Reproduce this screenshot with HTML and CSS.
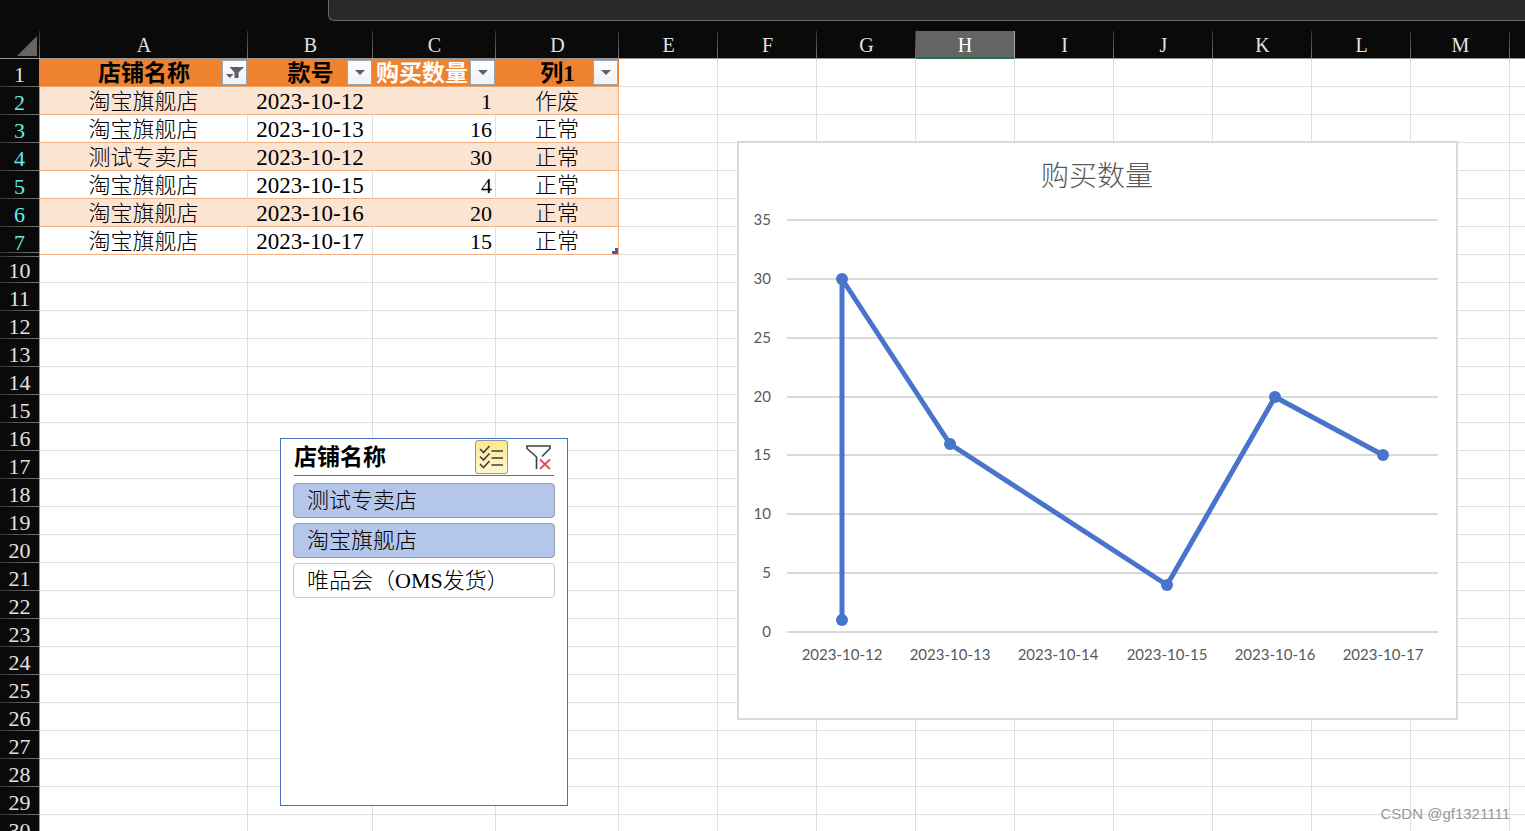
FILE: index.html
```html
<!DOCTYPE html>
<html lang="zh-CN">
<head>
<meta charset="utf-8">
<title>购买数量</title>
<link rel="stylesheet" href="styles.css">
</head>
<body>
<header class="topbar"><div class="formula-bar"></div></header>
<main class="workbook">
  <table class="sheet">
    <colgroup>
      <col class="col-head"><col class="col-a"><col class="col-b"><col class="col-c"><col class="col-c">
      <col class="col-std"><col class="col-std"><col class="col-std"><col class="col-std"><col class="col-std">
      <col class="col-std"><col class="col-std"><col class="col-std"><col class="col-std"><col>
    </colgroup>
    <thead><tr id="letters"></tr></thead>
    <tbody id="rows"></tbody>
  </table>

  <section class="slicer" aria-label="店铺名称">
    <div class="slicer-head">
      <h2 class="slicer-title">店铺名称</h2>
      <button class="tool tool-on" type="button" aria-label="多选">
        <svg width="26" height="26" viewBox="0 0 26 26" fill="none" stroke="#3f3f3f" stroke-width="1.6">
          <path d="M1 5l3.500 3.500L10.500 2M1 12.500l3.500 3.500L10.500 9.500M1 20l3.500 3.500L10.500 17"/>
          <path d="M12.500 7h11.500M12.500 14h11.500M12.500 21h11.500"/>
        </svg>
      </button>
      <button class="tool" type="button" aria-label="清除筛选器">
        <svg width="28" height="28" viewBox="0 0 28 28" fill="none" stroke="#3f3f3f" stroke-width="1.600">
          <path fill="#fafafa" stroke="none" d="M3 3h23v3l-8 8v5l-6 5v-11L3 6z"/>
          <path d="M12.500 26V14L3 5.500V3h23v2.500L18 13.500"/>
          <path stroke="#e8484d" stroke-width="1.800" d="M16 16.500l10 9.500M26 16.500L16 26"/>
        </svg>
      </button>
    </div>
    <div class="slicer-items">
      <button class="item item-on" type="button">测试专卖店</button>
      <button class="item item-on" type="button">淘宝旗舰店</button>
      <button class="item" type="button">唯品会（OMS发货）</button>
    </div>
  </section>

  <figure class="chart">
    <svg id="plot" width="717" height="575" viewBox="2 2 717 575" role="img" aria-label="购买数量">
      <text class="chart-title" x="360" y="45">购买数量</text>
    </svg>
  </figure>
  <div class="watermark">CSDN @gf1321111</div>
</main>
<script src="script.js"></script>
</body>
</html>
```

FILE: styles.css
```css
* { box-sizing: border-box; }

body {
  margin: 0;
  height: 100vh;
  display: flex;
  flex-direction: column;
  overflow: hidden;
  background: #fff;
  color: #000;
  font-family: "Liberation Serif", "Noto Sans CJK SC", serif;
  font-size: 22px;
  font-weight: 300;
}

button { font: inherit; color: inherit; }

.topbar {
  flex: none;
  height: 31px;
  padding-left: 328px;
  background: #0a0a0a;
}
.formula-bar {
  height: 21px;
  background: #292929;
  border: solid #6a6a6a;
  border-width: 0 0 1px 1px;
  border-bottom-left-radius: 6px;
}

.workbook { position: relative; flex: 1; overflow: hidden; }

.sheet {
  width: 100%;
  table-layout: fixed;
  border-collapse: separate;
  border-spacing: 0;
  line-height: 25px;
}
.col-head { width: 40px; }
.col-a { width: 208px; }
.col-b { width: 125px; }
.col-c { width: 123px; }
.col-std { width: 99px; }

.sheet th, .sheet td {
  height: 28px;
  padding: 2px 0 0;
  overflow: hidden;
  white-space: nowrap;
  text-align: center;
  font-weight: 300;
}
.sheet td {
  border-right: 1px solid #dfdfdf;
  border-bottom: 1px solid #dfdfdf;
}
.sheet td:last-child, .sheet .letter:last-child { border-right: 0; }

.sheet .letter {
  background: linear-gradient(#333, #777) 100% 0 / 1px 100% no-repeat #0a0a0a;
  border-bottom: 1px solid #969696;
  color: #e2e2e2;
  font-size: 20px;
}
.sheet .letter:last-child { background: #0a0a0a; }
.sheet .letter-on {
  background: #646464;
  border-right: 1px solid #a8a8a8;
  border-bottom: 1px solid #217346;
  box-shadow: inset 0 -1px #217346;
  color: #fff;
}
.corner svg { display: block; margin: 2px 3px 2px auto; }

.number {
  background: linear-gradient(90deg, #333, #777) 0 100% / 100% 1px no-repeat #0a0a0a;
  border-right: 1px solid #969696;
  color: #e2e2e2;
}
.number-filtered { color: #62eeea; }
.number-before-gap { background-position: 0 25px; }
.number-after-gap {
  background:
    linear-gradient(90deg, #333, #777) 0 1px / 100% 1px no-repeat,
    linear-gradient(90deg, #333, #777) 0 100% / 100% 1px no-repeat #0a0a0a;
}

.sheet .field {
  position: relative;
  background: #ee822f;
  border-right: 0;
  border-bottom: 1px solid #f4a15f;
  font-size: 23px;
  font-weight: 700;
}
.sheet .field-plain { color: #fff; text-align: left; padding-left: 3px; }
.filter {
  position: absolute;
  top: 1px;
  right: 1px;
  width: 25px;
  height: 25px;
  padding: 0;
  border: 1px solid #9ba7b4;
  background: linear-gradient(#fff, #eef1f6);
}
.filter svg { display: block; }

.sheet .record { border-bottom: 1px solid #f4b183; }
.sheet .band { background: #fce4d3; border-right: 1px solid #fce4d3; }
.sheet .date { font-size: 23px; }
.sheet .amount { text-align: right; padding-right: 3px; }
.sheet .edge { position: relative; border-right: 1px solid #f4b183; }
.handle { position: absolute; right: 0; bottom: 0; display: block; }

.slicer {
  position: absolute;
  left: 280px;
  top: 407px;
  width: 288px;
  height: 368px;
  padding: 1px 12px;
  border: 1px solid #4472c4;
  background: #fff;
}
.slicer-head {
  display: flex;
  align-items: flex-start;
  gap: 13px;
  height: 36px;
  margin: 0 1px;
  border-bottom: 1px solid #4472c4;
}
.slicer-title { flex: 1; margin: 0; font-size: 23px; line-height: 36px; }
.tool {
  display: grid;
  place-items: center;
  width: 33px;
  height: 34px;
  padding: 0;
  border: 1px solid transparent;
  border-radius: 3px;
  background: none;
}
.tool-on {
  border-color: #979797;
  background: linear-gradient(#fce98c, #fdf5d3);
}
.slicer-items { display: flex; flex-direction: column; gap: 5px; padding-top: 7px; }
.item {
  height: 35px;
  padding: 0 13px;
  border: 1px solid #c8c8c8;
  border-radius: 4px;
  background: #fff;
  line-height: 32px;
  text-align: left;
}
.item-on { background: #b4c6ea; border-color: #979ba5; }

.chart {
  position: absolute;
  left: 737px;
  top: 110px;
  margin: 0;
  border: 2px solid #d9d9d9;
  background: #fff;
}
.chart svg { display: block; }
.chart-title { font-size: 28px; fill: #595959; text-anchor: middle; }
.grid-line { stroke: #d9d9d9; stroke-width: 2; }
.axis { font-family: Lato, sans-serif; font-size: 15px; font-weight: 400; fill: #595959; }
.axis-y { text-anchor: end; }
.axis-x { text-anchor: middle; }
.series { fill: none; stroke: #4874cb; stroke-width: 5; stroke-linejoin: round; }
.dot { fill: #4874cb; }

.watermark {
  position: absolute;
  right: 15px;
  bottom: 8px;
  color: #969696;
  font: 15px/18px "Liberation Sans", sans-serif;
}
```

FILE: script.js
```js
const fields = ["店铺名称", "款号", "购买数量", "列1"];
const records = [
  ["淘宝旗舰店", "2023-10-12", 1, "作废"],
  ["淘宝旗舰店", "2023-10-13", 16, "正常"],
  ["测试专卖店", "2023-10-12", 30, "正常"],
  ["淘宝旗舰店", "2023-10-15", 4, "正常"],
  ["淘宝旗舰店", "2023-10-16", 20, "正常"],
  ["淘宝旗舰店", "2023-10-17", 15, "正常"]
];
const columnCount = 14;
const lastRow = 30;
const arrow = '<svg width="23" height="23" viewBox="0 0 23 23"><path d="M7 9h10l-5 5z" fill="#5c5f63"/></svg>';
const funnel = '<svg width="23" height="23" viewBox="0 0 23 23"><path d="M6.500 6H21l-5.500 5.500V17h-4v-5.500z" fill="#5c5f63"/><path d="M3 13h7.500l-3.700 4z" fill="#5c5f63"/></svg>';

let letters = '<th class="letter corner"><svg width="20" height="20" viewBox="0 0 20 20"><path d="M20 0v20H0z" fill="#666"/></svg></th>';
for (let c = 0; c < columnCount; c++) {
  const name = c < 13 ? "ABCDEFGHIJKLM"[c] : "";
  letters += `<th class="letter${name === "H" ? " letter-on" : ""}" scope="col">${name}</th>`;
}
document.getElementById("letters").innerHTML = letters;

function cell(row, c) {
  if (c > 3 || row > 7) return "<td></td>";
  if (row === 1) {
    return `<td class="field${c === 2 ? " field-plain" : ""}">${fields[c]}` +
      `<button class="filter" type="button" aria-label="筛选 ${fields[c]}">${c === 0 ? funnel : arrow}</button></td>`;
  }
  const kind = ["", " date", " amount", " edge"][c];
  const band = row % 2 === 0 ? " band" : "";
  const handle = row === 7 && c === 3
    ? '<svg class="handle" width="6" height="6" viewBox="0 0 6 6"><path d="M3 0h3v6H0V3h3z" fill="#4a59b0"/></svg>' : "";
  return `<td class="record${band}${kind}">${records[row - 2][c]}${handle}</td>`;
}

let body = "";
for (let row = 1; row <= lastRow; row++) {
  if (row === 8 || row === 9) continue;
  let kind = row > 1 && row < 8 ? " number-filtered" : "";
  if (row === 7) kind += " number-before-gap";
  if (row === 10) kind += " number-after-gap";
  body += `<tr><th class="number${kind}" scope="row">${row}</th>`;
  for (let c = 0; c < columnCount; c++) body += cell(row, c);
  body += "</tr>";
}
document.getElementById("rows").innerHTML = body;

const baseY = 491;
const yOf = value => Math.round(baseY - value * 412 / 35);
const xOf = day => Math.round(105 + (day - 12) * 541 / 5);
const points = records
  .map(r => [Number(r[1].slice(-2)), r[2]])
  .sort((a, b) => a[0] - b[0]);
let plot = "";
for (let v = 0; v <= 35; v += 5) {
  plot += `<line class="grid-line" x1="50" x2="701" y1="${yOf(v)}" y2="${yOf(v)}"/>`;
  plot += `<text class="axis axis-y" x="34" y="${yOf(v) + 5}">${v}</text>`;
}
for (let day = 12; day <= 17; day++) {
  plot += `<text class="axis axis-x" x="${xOf(day)}" y="519">2023-10-${day}</text>`;
}
plot += `<polyline class="series" points="${points.map(p => xOf(p[0]) + "," + yOf(p[1])).join(" ")}"/>`;
plot += points.map(p => `<circle class="dot" cx="${xOf(p[0])}" cy="${yOf(p[1])}" r="6"/>`).join("");
document.getElementById("plot").insertAdjacentHTML("beforeend", plot);
```
